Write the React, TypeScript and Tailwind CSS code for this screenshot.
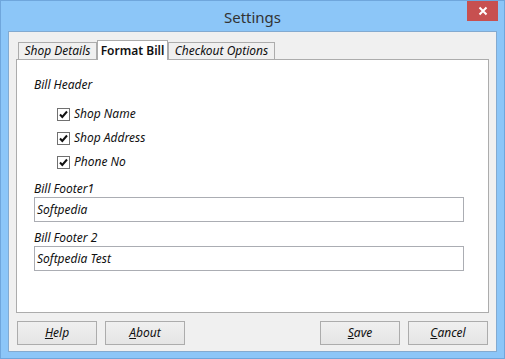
import React from 'react'

const font = { fontFamily: '"Noto Sans", "Open Sans", sans-serif' }

const Check: React.FC<{ label: string }> = ({ label }) => (
  <div className="flex items-center h-[24px]">
    <div className="w-[13px] h-[13px] border border-[#707070] bg-white flex items-center justify-center">
      <svg width="9" height="9" viewBox="0 0 9 9">
        <path d="M1 4.5 L3.3 7 L8 1.5" fill="none" stroke="#111" strokeWidth="2" />
      </svg>
    </div>
    <span className="ml-[4px] italic text-[12px] text-[#111]">{label}</span>
  </div>
)

const Btn: React.FC<{ first: string; rest: string }> = ({ first, rest }) => (
  <button className="w-[80px] h-[24px] border border-[#acacac] bg-gradient-to-b from-[#f0f0f0] to-[#e5e5e5] italic text-[12px] text-[#111] leading-none">
    <span className="underline">{first}</span>
    {rest}
  </button>
)

export default function App() {
  return (
    <div className="w-[505px] h-[359px] bg-[#8cc6f8] border border-[#6fa6dc] flex flex-col overflow-hidden" style={font}>
      <div className="relative h-[30px] shrink-0 flex items-center justify-center">
        <span className="text-[15px] text-[#333] mt-[2px]">Settings</span>
        <div className="absolute right-[6px] top-0 w-[31px] h-[20px] bg-[#c75050] flex items-center justify-center">
          <svg width="10" height="10" viewBox="0 0 10 10">
            <path d="M1.5 1.5 L8.5 8.5 M8.5 1.5 L1.5 8.5" stroke="#fff" strokeWidth="2" />
          </svg>
        </div>
      </div>
      <div className="mx-[7px] h-[321px] border border-[#83aad0] bg-[#f0f0f0] flex flex-col px-[7px] pt-[8px]">
        <div className="flex items-end h-[19px] pl-[2px] relative z-10">
          <div className="h-[17px] border border-b-0 border-[#acacac] bg-[#f0f0f0] italic text-[12px] text-[#111] flex items-center w-[79px] justify-center whitespace-nowrap">Shop Details</div>
          <div className="h-[20px] -mb-[1px] border border-b-0 border-[#acacac] bg-white font-semibold text-[12px] text-[#111] flex items-center w-[71px] justify-center whitespace-nowrap">Format Bill</div>
          <div className="h-[17px] border border-b-0 border-[#acacac] bg-[#f0f0f0] italic text-[12px] text-[#111] flex items-center w-[107px] justify-center whitespace-nowrap">Checkout Options</div>
        </div>
        <div className="h-[254px] border border-[#acacac] bg-white pl-[17px] pt-[17px]">
          <div className="italic text-[12px] text-[#111] h-[16px] leading-[16px]">Bill Header</div>
          <div className="pl-[23px] mt-[9px] flex flex-col">
            <Check label="Shop Name" />
            <Check label="Shop Address" />
            <Check label="Phone No" />
          </div>
          <div className="mt-[7px] italic text-[12px] text-[#111] h-[16px] leading-[16px]">Bill Footer1</div>
          <div className="w-[430px] h-[25px] border border-[#abadb3] bg-white italic text-[12px] text-[#111] pl-[2px] flex items-center">Softpedia</div>
          <div className="mt-[8px] italic text-[12px] text-[#111] h-[16px] leading-[16px]">Bill Footer 2</div>
          <div className="w-[430px] h-[25px] border border-[#abadb3] bg-white italic text-[12px] text-[#111] pl-[2px] flex items-center">Softpedia Test</div>
        </div>
        <div className="flex mt-[8px] pl-[1px] pr-[1px]">
          <div className="flex gap-[8px]">
            <Btn first="H" rest="elp" />
            <Btn first="A" rest="bout" />
          </div>
          <div className="flex gap-[8px] ml-auto">
            <Btn first="S" rest="ave" />
            <Btn first="C" rest="ancel" />
          </div>
        </div>
      </div>
    </div>
  )
}
